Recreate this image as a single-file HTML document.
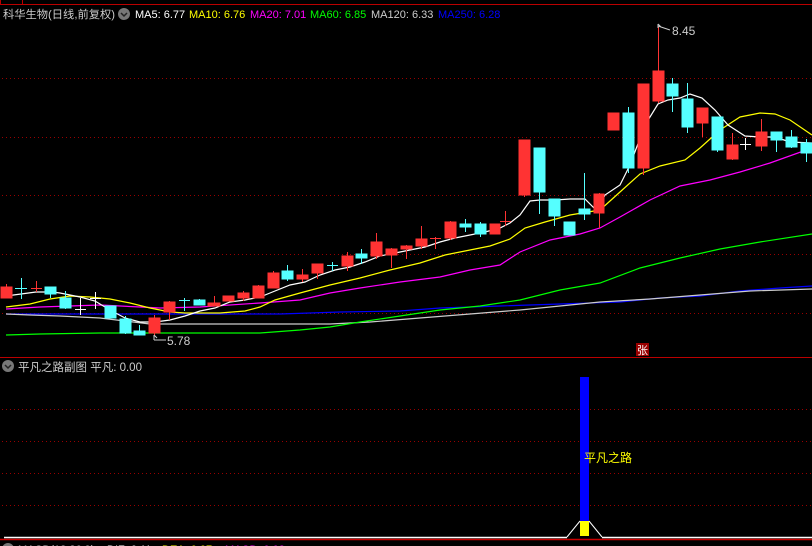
<!DOCTYPE html>
<html><head><meta charset="utf-8"><style>
html,body{margin:0;padding:0;background:#000;width:812px;height:546px;overflow:hidden}
svg{display:block}
text{font-family:"Liberation Sans","Noto Sans CJK SC",sans-serif}
</style></head><body>
<svg width="812" height="546" viewBox="0 0 812 546" xmlns="http://www.w3.org/2000/svg">
<rect width="812" height="546" fill="#000"/>
<path d="M0.5 0 V4.5 H812 M22.5 0 V4.5" stroke="#b00" stroke-width="1" fill="none"/>
<g stroke="#900" stroke-width="1" stroke-dasharray="1,3">
<line x1="2" y1="78.5" x2="812" y2="78.5"/>
<line x1="2" y1="137.5" x2="812" y2="137.5"/>
<line x1="2" y1="195.5" x2="812" y2="195.5"/>
<line x1="2" y1="254.5" x2="812" y2="254.5"/>
<line x1="2" y1="313.5" x2="812" y2="313.5"/>
<line x1="2" y1="409.5" x2="812" y2="409.5"/>
<line x1="2" y1="441.5" x2="812" y2="441.5"/>
<line x1="2" y1="473.5" x2="812" y2="473.5"/>
<line x1="2" y1="505.5" x2="812" y2="505.5"/>
</g>
<line x1="0" y1="357.5" x2="812" y2="357.5" stroke="#b00"/>
<line x1="0" y1="539.5" x2="812" y2="539.5" stroke="#c00" stroke-width="1.5"/>

<g fill="none" stroke-width="1.2">
<polyline stroke="#00f" points="6,314 280,314 340,312 400,311 440,308 500,306 560,304 620,302 660,298 700,296 740,291 780,288 812,286"/>
<polyline stroke="#ccc" points="6,314 30,315 60,316 100,318 150,324 180,324 260,324 330,324 370,322 420,318 470,314 520,310 560,306 600,302 650,299 700,295 750,291 812,289"/>
<polyline stroke="#0f0" points="6,335 40,334 100,333 200,333 260,333 300,330 330,327 360,322 400,316 440,310 480,306 520,300 560,290 600,283 640,268 680,258 720,249 760,242 812,234"/>
<polyline stroke="#f0f" points="6,309 40,307 100,305 140,307 160,308 200,307 260,303 300,300 330,293 360,288 400,282 440,277 470,270 500,265 520,252 550,240 580,234 600,228 620,217 650,200 680,186 710,180 740,172 770,163 812,148"/>
<polyline stroke="#ff0" points="6,307 30,304 50,299 70,296 90,297 110,299 130,303 150,308 170,312 185,313 200,313 220,313 245,311 260,307 275,300 300,293 330,285 360,278 390,270 420,263 445,255 470,250 490,246 510,239 525,228 545,222 570,215 600,210 620,192 640,174 660,166 685,160 700,148 720,130 740,117 760,113 775,114 790,120 812,135"/>
<polyline stroke="#fff" points="6,296 21,294 36,292 52,292 60,293 80,297 95,301 110,310 125,318 140,322 155,322 170,320 185,316 200,311 215,308 230,302 245,300 260,297 270,293 290,285 305,282 320,275 335,270 350,267 365,262 380,256 395,253 410,250 425,247 440,242 455,238 470,235 485,232 500,228 510,223 520,215 530,201 540,200 555,200 570,199 585,199 597,211 605,195 620,185 630,165 645,125 658,104 668,100 680,98 690,94 702,98 715,110 728,125 745,136 760,137 775,137 790,142 812,143"/>
</g>

<g>
<g fill="#f33" stroke="#f33">
<line x1="6.5" y1="284" x2="6.5" y2="298"/><rect x="1" y="287" width="11" height="11"/>
<line x1="36.5" y1="281" x2="36.5" y2="292"/><line x1="31" y1="288.5" x2="42" y2="288.5"/>
<line x1="154.5" y1="315" x2="154.5" y2="336"/><rect x="149" y="318" width="11" height="15"/>
<line x1="169.5" y1="301" x2="169.5" y2="320"/><rect x="164" y="302" width="11" height="10"/>
<line x1="214.5" y1="296" x2="214.5" y2="306"/><rect x="208" y="303" width="12" height="3"/>
<rect x="223" y="296" width="11" height="5"/>
<line x1="243.5" y1="291" x2="243.5" y2="301"/><rect x="238" y="293" width="11" height="5"/>
<line x1="258.5" y1="285" x2="258.5" y2="298"/><rect x="253" y="286" width="11" height="12"/>
<line x1="273.5" y1="271" x2="273.5" y2="288"/><rect x="268" y="273" width="11" height="15"/>
<line x1="302.5" y1="269" x2="302.5" y2="282"/><rect x="297" y="275" width="11" height="4"/>
<line x1="317.5" y1="264" x2="317.5" y2="279"/><rect x="312" y="264" width="11" height="9"/>
<line x1="347.5" y1="252" x2="347.5" y2="271"/><rect x="342" y="256" width="11" height="10"/>
<line x1="376.5" y1="233" x2="376.5" y2="259"/><rect x="371" y="242" width="11" height="14"/>
<line x1="391.5" y1="248" x2="391.5" y2="268"/><rect x="386" y="249" width="11" height="6"/>
<line x1="406.5" y1="245" x2="406.5" y2="259"/><rect x="401" y="246" width="11" height="3"/>
<line x1="421.5" y1="226" x2="421.5" y2="249"/><rect x="416" y="239" width="11" height="7"/>
<line x1="435.5" y1="237" x2="435.5" y2="249"/><line x1="430" y1="238.5" x2="441" y2="238.5"/>
<line x1="450.5" y1="221" x2="450.5" y2="240"/><rect x="445" y="222" width="11" height="16"/>
<rect x="490" y="224" width="10" height="10"/>
<line x1="505.5" y1="211" x2="505.5" y2="226"/><line x1="500" y1="221.5" x2="511" y2="221.5"/>
<line x1="524.5" y1="140" x2="524.5" y2="197"/><rect x="519" y="140" width="11" height="55"/>
<line x1="599.5" y1="193" x2="599.5" y2="228"/><rect x="594" y="194" width="10" height="19"/>
<rect x="608" y="113" width="11" height="17"/>
<line x1="643.5" y1="84" x2="643.5" y2="175"/><rect x="638" y="84" width="11" height="84"/>
<line x1="658.5" y1="27" x2="658.5" y2="103"/><rect x="653" y="71" width="11" height="30"/>
<line x1="702.5" y1="108" x2="702.5" y2="137"/><rect x="697" y="108" width="11" height="15"/>
<line x1="732.5" y1="133" x2="732.5" y2="160"/><rect x="727" y="145" width="11" height="14"/>
<line x1="761.5" y1="119" x2="761.5" y2="151"/><rect x="756" y="132" width="11" height="14"/>
</g>
<g fill="#5ff" stroke="#5ff">
<line x1="21.5" y1="278" x2="21.5" y2="299"/><line x1="15" y1="288.5" x2="27" y2="288.5"/>
<line x1="50.5" y1="287" x2="50.5" y2="298"/><rect x="45" y="287" width="11" height="7"/>
<line x1="65.5" y1="291" x2="65.5" y2="309"/><rect x="60" y="298" width="11" height="10"/>
<rect x="105" y="306" width="11" height="12"/>
<line x1="125.5" y1="316" x2="125.5" y2="334"/><rect x="120" y="319" width="11" height="14"/>
<line x1="139.5" y1="325" x2="139.5" y2="335"/><rect x="134" y="331" width="11" height="4"/>
<line x1="184.5" y1="298" x2="184.5" y2="311"/><line x1="179" y1="300.5" x2="190" y2="300.5"/>
<line x1="199.5" y1="299" x2="199.5" y2="305"/><rect x="194" y="300" width="11" height="5"/>
<line x1="287.5" y1="265" x2="287.5" y2="281"/><rect x="282" y="271" width="11" height="8"/>
<line x1="332.5" y1="262" x2="332.5" y2="271"/><line x1="327" y1="265.5" x2="338" y2="265.5"/>
<line x1="361.5" y1="249" x2="361.5" y2="264"/><rect x="356" y="254" width="11" height="4"/>
<line x1="465.5" y1="219" x2="465.5" y2="232"/><rect x="460" y="224" width="11" height="3"/>
<line x1="480.5" y1="222" x2="480.5" y2="237"/><rect x="475" y="224" width="11" height="10"/>
<line x1="539.5" y1="148" x2="539.5" y2="214"/><rect x="534" y="148" width="11" height="44"/>
<line x1="554.5" y1="199" x2="554.5" y2="226"/><rect x="549" y="199" width="11" height="17"/>
<rect x="564" y="222" width="11" height="13"/>
<line x1="584.5" y1="173" x2="584.5" y2="220"/><rect x="579" y="209" width="11" height="5"/>
<line x1="628.5" y1="107" x2="628.5" y2="173"/><rect x="623" y="113" width="11" height="55"/>
<line x1="672.5" y1="78" x2="672.5" y2="112"/><rect x="667" y="84" width="11" height="12"/>
<line x1="687.5" y1="83" x2="687.5" y2="133"/><rect x="682" y="99" width="11" height="28"/>
<line x1="717.5" y1="117" x2="717.5" y2="152"/><rect x="712" y="117" width="11" height="33"/>
<line x1="776.5" y1="132" x2="776.5" y2="152"/><rect x="771" y="132" width="11" height="8"/>
<line x1="791.5" y1="130" x2="791.5" y2="148"/><rect x="786" y="137" width="11" height="10"/>
<line x1="806.5" y1="139" x2="806.5" y2="162"/><rect x="801" y="143" width="11" height="10"/>
</g>
<g stroke="#fff">
<line x1="80.5" y1="298" x2="80.5" y2="315"/><line x1="75" y1="309.5" x2="86" y2="309.5"/>
<line x1="95.5" y1="292" x2="95.5" y2="309"/><line x1="90" y1="298.5" x2="101" y2="298.5"/>
<line x1="745.5" y1="138" x2="745.5" y2="150"/><line x1="740" y1="144.5" x2="751" y2="144.5"/>
</g>
</g>

<path d="M154 335 V340 M154 335 L157 338 M154 340 H166" stroke="#ccc" fill="none"/>
<text x="167" y="345" font-size="12" fill="#ccc">5.78</text>
<path d="M658 24 V28 M658 24 L661 27 M658 26 L670 30" stroke="#ccc" fill="none"/>
<text x="672" y="35" font-size="12" fill="#ccc">8.45</text>

<rect x="636" y="343" width="13" height="13" fill="#900"/>
<text x="642.5" y="354" font-size="11" fill="#fff" text-anchor="middle">张</text>

<circle cx="124" cy="14" r="6" fill="#777"/>
<path d="M121 13 L124 16 L127 13" stroke="#222" stroke-width="1.5" fill="none"/>
<text y="18" font-size="11">
<tspan x="3" fill="#ccc" textLength="112" lengthAdjust="spacingAndGlyphs">科华生物(日线,前复权)</tspan>
<tspan x="135" fill="#fff">MA5: 6.77</tspan>
<tspan x="189" fill="#ff0">MA10: 6.76</tspan>
<tspan x="250" fill="#f0f">MA20: 7.01</tspan>
<tspan x="310" fill="#0f0">MA60: 6.85</tspan>
<tspan x="371" fill="#ccc">MA120: 6.33</tspan>
<tspan x="438" fill="#00f">MA250: 6.28</tspan>
</text>

<circle cx="8" cy="366" r="6" fill="#777"/>
<path d="M5 365 L8 368 L11 365" stroke="#222" stroke-width="1.5" fill="none"/>
<text x="18" y="371" font-size="11.5" fill="#ccc">平凡之路副图  平凡: 0.00</text>

<rect x="580" y="377" width="9" height="144" fill="#00f"/>
<rect x="580" y="521" width="9" height="15" fill="#ff0"/>
<path d="M567 537 L580 521 M589 521 L602 537" stroke="#fff" stroke-width="1" fill="none"/>
<line x1="4" y1="537.5" x2="567" y2="537.5" stroke="#fff" stroke-width="1.5"/>
<line x1="602" y1="537.5" x2="812" y2="537.5" stroke="#fff" stroke-width="1.5"/>
<text x="584" y="462" font-size="12" fill="#ff0">平凡之路</text>

<circle cx="8" cy="549" r="6" fill="#777"/>
<text y="553" font-size="11"><tspan x="18" fill="#ccc">MACD(12,26,9)</tspan><tspan x="107" fill="#fff">DIF: 0.11</tspan><tspan x="162" fill="#ff0">DEA: 0.07</tspan><tspan x="225" fill="#f0f">MACD: 0.08</tspan></text>
</svg>
</body></html>
